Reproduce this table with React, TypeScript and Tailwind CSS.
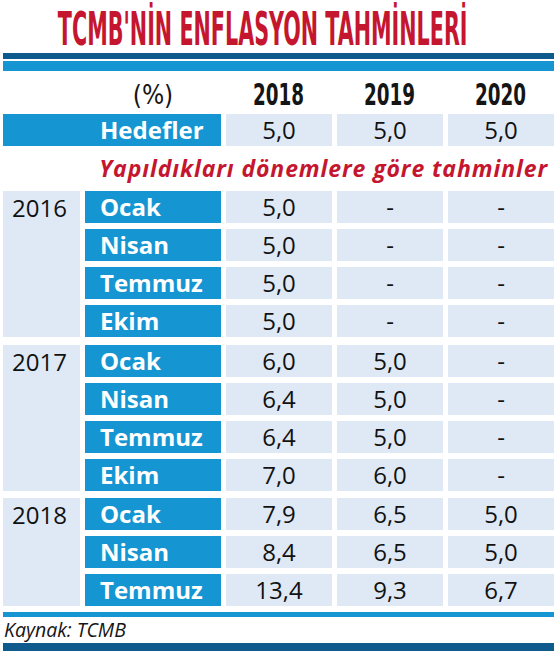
const groups = [
  {
    year: '2016',
    rows: [
      ['Ocak', '5,0', '-', '-'],
      ['Nisan', '5,0', '-', '-'],
      ['Temmuz', '5,0', '-', '-'],
      ['Ekim', '5,0', '-', '-'],
    ],
  },
  {
    year: '2017',
    rows: [
      ['Ocak', '6,0', '5,0', '-'],
      ['Nisan', '6,4', '5,0', '-'],
      ['Temmuz', '6,4', '5,0', '-'],
      ['Ekim', '7,0', '6,0', '-'],
    ],
  },
  {
    year: '2018',
    rows: [
      ['Ocak', '7,9', '6,5', '5,0'],
      ['Nisan', '8,4', '6,5', '5,0'],
      ['Temmuz', '13,4', '9,3', '6,7'],
    ],
  },
];

const body = { fontFamily: '"Open Sans", "Noto Sans", sans-serif' };
const narrow = { fontFamily: '"Liberation Sans Narrow", "DejaVu Sans Condensed", sans-serif' };

function Cell({ value }: { value: string }) {
  return (
    <div className="flex h-8 items-center justify-center bg-[#dfe9f5] text-[24px] leading-none text-[#111]">
      {value}
    </div>
  );
}

export default function App() {
  return (
    <div className="w-[556px] h-[651px] overflow-hidden bg-white pl-[3px] pr-[2px]" style={body}>
      {/* title sits a bit left of centre in the original */}
      <div className="flex h-[53px] items-start justify-center pr-[32px] pt-[6px]">
        <h1
          className="inline-block origin-center scale-x-[0.5] whitespace-nowrap text-[46px] font-bold leading-[46px] text-[#c5162f]"
          style={narrow}
        >
          TCMB'NİN ENFLASYON TAHMİNLERİ
        </h1>
      </div>

      <div className="h-[6px] bg-[#0f5a8c]" />
      <div className="mt-[2px] h-[10px] bg-[#1596d3]" />

      <div className="grid h-[43px] grid-cols-[77px_136px_106px_106px_106px] items-center gap-x-[5px] pt-[4px]">
        <div />
        <div className="text-center text-[26px] leading-none text-[#151515]" style={narrow}>
          (%)
        </div>
        {['2018', '2019', '2020'].map((y) => (
          <div key={y} className="flex justify-center">
            <span
              className="inline-block scale-x-[0.68] text-[30px] font-bold leading-none text-[#151515]"
              style={narrow}
            >
              {y}
            </span>
          </div>
        ))}
      </div>

      <div className="grid grid-cols-[218px_106px_106px_106px] gap-x-[5px]">
        <div className="flex h-8 items-center bg-[#1596d3] pl-[97px] text-[24px] font-bold leading-none text-white">
          Hedefler
        </div>
        <Cell value="5,0" />
        <Cell value="5,0" />
        <Cell value="5,0" />
      </div>

      <div className="flex h-[45px] items-center justify-end pr-[6px] text-[23px] font-bold italic leading-none tracking-[0.9px] text-[#c5162f]">
        Yapıldıkları dönemlere göre tahminler
      </div>

      <div className="flex flex-col gap-[7.5px]">
        {groups.map((g) => (
          <div key={g.year} className="flex gap-x-[5px]">
            <div className="w-[77px] shrink-0 bg-[#dfe9f5] pr-[4px] pt-[5px] text-center text-[24px] leading-[24px] text-[#111]">
              {g.year}
            </div>
            <div className="flex flex-1 flex-col gap-[6px]">
              {g.rows.map((r) => (
                <div key={r[0]} className="grid grid-cols-[136px_106px_106px_106px] gap-x-[5px]">
                  <div className="flex h-8 items-center bg-[#1596d3] pl-[15px] text-[24px] font-bold leading-none text-white">
                    {r[0]}
                  </div>
                  <Cell value={r[1]} />
                  <Cell value={r[2]} />
                  <Cell value={r[3]} />
                </div>
              ))}
            </div>
          </div>
        ))}
      </div>

      <div className="mt-[6px] h-[5px] bg-[#1596d3]" />
      <div className="flex h-[26px] items-center pl-[1px] text-[19.5px] italic leading-none text-[#151515]">
        Kaynak: TCMB
      </div>
      <div className="h-[8px] bg-[#0f5a8c]" />
    </div>
  );
}
